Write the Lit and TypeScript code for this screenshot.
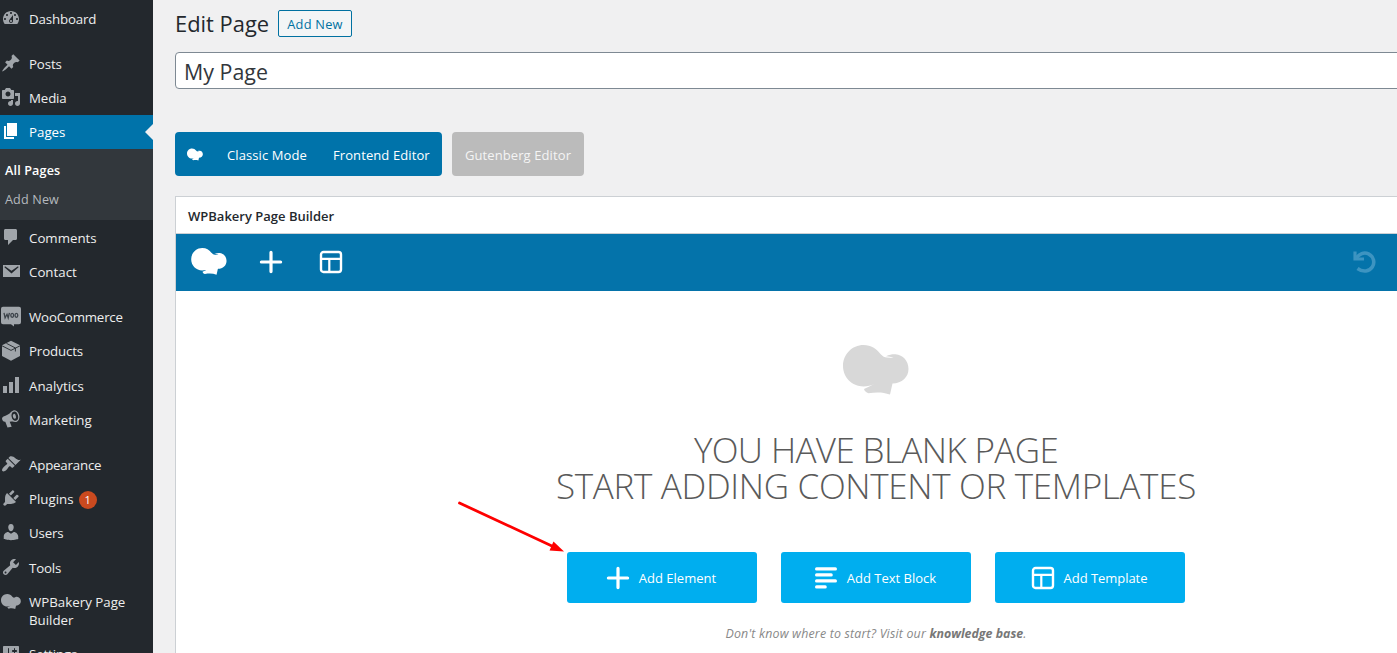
import { LitElement, html, css, svg } from "lit";
import { customElement, property } from "lit/decorators.js";

const hat = svg`<path d="M20.500 0C28.500 0 33 3.500 37.500 9C39.800 11.500 41.500 12.500 44 12.500L50.500 12.900C48.500 11.800 45.500 11.300 43 11.200C46.500 9.600 50 9 52.500 9.300C60 9.800 65.500 16 65.500 24C65.500 32 59 38.500 49.500 38.500L47 49.500C40 47 33 47 25.500 48.300C23 47.500 21.500 46 21 44L32 38.800C28 40.600 24.500 41.500 20.500 41.500C9 41.500 0 32.500 0 20.800C0 9.500 9 0 20.500 0Z"/>`;

const icons: Record<string, unknown> = {
  dashboard: svg`<path fill-rule="evenodd" d="M3.760 16h12.480c1.100-1.370 1.760-3.110 1.760-5 0-4.420-3.580-8-8-8s-8 3.580-8 8c0 1.890.66 3.630 1.760 5zM10 4c.55 0 1 .45 1 1s-.45 1-1 1-1-.45-1-1 .45-1 1-1zM6 6c.55 0 1 .45 1 1s-.45 1-1 1-1-.45-1-1 .45-1 1-1zm8 0c.55 0 1 .45 1 1s-.45 1-1 1-1-.45-1-1 .45-1 1-1zm-5.370 5.550L12 7v6c0 1.100-.9 2-2 2s-2-.9-2-2c0-.57.24-1.080.63-1.450zM4 10c.55 0 1 .45 1 1s-.45 1-1 1-1-.45-1-1 .45-1 1-1zm12 0c.55 0 1 .45 1 1s-.45 1-1 1-1-.45-1-1 .45-1 1-1zm-5 3c0-.55-.45-1-1-1s-1 .45-1 1 .45 1 1 1 1-.45 1-1z"/>`,
  post: svg`<path d="M10.440 3.020l1.820-1.820 6.360 6.350-1.830 1.820c-1.050-.68-2.480-.57-3.410.36l-.75.75c-.92.93-1.040 2.350-.35 3.410l-1.830 1.820-2.410-2.410-2.800 2.790c-.42.42-3.380 2.710-3.800 2.290s1.860-3.390 2.280-3.810l2.790-2.790L4.100 9.360l1.830-1.820c1.050.69 2.480.57 3.400-.36l.75-.75c.93-.92 1.050-2.350.36-3.410z"/>`,
  media: svg`<path fill-rule="evenodd" d="M13 11V4c0-.55-.45-1-1-1h-1.670L9 1H5L3.670 3H2c-.55 0-1 .45-1 1v7c0 .55.45 1 1 1h10c.55 0 1-.45 1-1zM7 4.500c1.380 0 2.500 1.120 2.500 2.500S8.380 9.500 7 9.500 4.500 8.380 4.500 7 5.620 4.500 7 4.500zM14 6h5v10.500c0 1.380-1.120 2.500-2.500 2.500S14 17.880 14 16.500s1.120-2.500 2.500-2.500c.17 0 .34.02.5.05V9h-3V6zm-4 8.050V13h2v3.500c0 1.380-1.120 2.500-2.500 2.500S7 17.880 7 16.500 8.120 14 9.500 14c.17 0 .34.02.5.05z"/>`,
  page: svg`<path d="M6 15V2h10v13H6zm-1 1h8v2H3V5h2v11z"/>`,
  comment: svg`<path d="M4.500 2h10c.9 0 1.500.6 1.500 1.500v8c0 .9-.6 1.500-1.500 1.500H12l-5 5v-5H4.500c-.9 0-1.500-.6-1.500-1.500v-8C3 2.600 3.600 2 4.500 2z"/>`,
  mail: svg`<path fill-rule="evenodd" d="M2 4h17v12H2zM4 5.200L3.400 6.300l7.100 6.300 7.100-6.300-.6-1.100-6.500 4.500z"/>`,
  woo: svg`<g transform="translate(0 .8)"><path d="M2 0h16a2 2 0 0 1 2 2v13.500a2 2 0 0 1-2 2h-5v2.300l-3-2.300H2a2 2 0 0 1-2-2V2a2 2 0 0 1 2-2z"/><g fill="none" stroke="#3c434a" stroke-width="1.300"><path d="M3 6l1.100 5L6 7.500 7.200 11 8.400 6"/><ellipse cx="11.200" cy="8.500" rx="1.400" ry="2"/><ellipse cx="15.400" cy="8.500" rx="1.400" ry="2"/></g></g>`,
  box: svg`<g transform="translate(0 .8)"><path d="M10 0l9 4.500v10.800L10 20l-9-4.700V4.500z"/><path d="M1 5l9 4.600L19 5M5.400 2.500l9 4.700v3.500" fill="none" stroke="#23282d" stroke-width=".9"/></g>`,
  chart: svg`<path d="M2 11h4v7H2zM8 7h4v11H8zM14 2h4v16h-4z"/>`,
  horn: svg`<path d="M10.500 2.500C8 5.500 5 6.600 2.500 7.500 1 8.200.8 9.500 1.300 10.800c.5 1.400 1.600 2.200 3 1.900l2.200 5.800 4.200-.8-2-4.900c2-.5 4.100-.6 6.300 0z"/><ellipse cx="13.800" cy="7.200" rx="3.900" ry="5.300" transform="rotate(-15 13.800 7.200)" fill="#23282d" stroke="#a0a5aa" stroke-width="1.300"/><ellipse cx="13.400" cy="7.300" rx="1.500" ry="2.500" transform="rotate(-15 13.400 7.300)"/>`,
  brush: svg`<path d="M14.480 11.060L7.410 3.990l1.500-1.500c.5-.56 2.300-.47 3.510.32 1.210.8 1.430 1.280 2.910 2.100 1.180.64 2.450 1.260 4.450.85zm-.71.71L6.700 4.700 4.930 6.470c-.39.39-.39 1.020 0 1.410l1.060 1.060c.39.39.39 1.030 0 1.420-.6.6-1.430 1.110-2.210 1.690-.35.26-.7.53-1.010.84C1.430 14.230.4 16.080 1.400 17.070c.99 1 2.840-.03 4.180-1.360.31-.31.58-.66.85-1.020.57-.78 1.080-1.610 1.690-2.210.39-.39 1.020-.39 1.410 0l1.060 1.060c.39.39 1.020.39 1.410 0z"/>`,
  plug: svg`<path d="M13.110 4.360L9.870 7.600 8 5.730l3.240-3.240c.35-.34 1.050-.2 1.560.32.52.51.66 1.210.31 1.550zm-8 1.770l.91-1.120 9.010 9.010-1.190.84c-.71.71-2.630 1.160-3.820 1.160H6.140L4.900 17.260c-.59.59-1.540.59-2.120 0-.59-.58-.59-1.530 0-2.120l1.240-1.240v-3.880c0-1.130.4-3.190 1.090-3.890zm7.260 3.970l3.240-3.240c.34-.35 1.040-.21 1.550.31.52.51.66 1.210.31 1.550l-3.240 3.250z"/>`,
  user: svg`<path d="M10 9.250c-2.270 0-2.730-3.440-2.730-3.440C7 4.020 7.820 2 9.970 2c2.160 0 2.980 2.020 2.710 3.810 0 0-.41 3.440-2.680 3.440zm0 2.570L12.720 10c2.390 0 4.520 2.330 4.520 4.530v2.490s-3.650 1.130-7.240 1.130c-3.650 0-7.240-1.130-7.240-1.130v-2.490c0-2.250 1.940-4.480 4.470-4.480z"/>`,
  wrench: svg`<path fill-rule="evenodd" d="M16.680 9.770c-1.340 1.340-3.300 1.670-4.950.99l-5.410 6.520c-.99.99-2.590.99-3.580 0s-.99-2.590 0-3.570l6.520-5.420c-.68-1.650-.35-3.610.99-4.950 1.280-1.280 3.120-1.620 4.720-1.060l-2.890 2.890 2.820 2.820 2.860-2.870c.53 1.580.18 3.390-1.080 4.650zM3.810 16.210c.4.39 1.040.39 1.430 0 .4-.4.4-1.040 0-1.430-.39-.4-1.030-.4-1.430 0-.39.39-.39 1.030 0 1.430z"/>`,
  bakery: svg`<g transform="translate(0 3) scale(.303)">${hat}</g>`,
  sliders: svg`<path fill-rule="evenodd" d="M18 16V4c0-.55-.45-1-1-1H3c-.55 0-1 .45-1 1v12c0 .55.45 1 1 1h14c.55 0 1-.45 1-1zM8 11h1c.55 0 1 .45 1 1s-.45 1-1 1H8v1.500c0 .28-.22.5-.5.5s-.5-.22-.5-.5V13H6c-.55 0-1-.45-1-1s.45-1 1-1h1V5.500c0-.28.22-.5.5-.5s.5.22.5.5zM13 9h-1c-.55 0-1-.45-1-1s.45-1 1-1h1V5.500c0-.28.22-.5.5-.5s.5.22.5.5V7h1c.55 0 1 .45 1 1s-.45 1-1 1h-1v5.500c0 .28-.22.5-.5.5s-.5-.22-.5-.5z"/>`,
};

const plusIcon = html`<svg class="glyph" viewBox="0 0 24 24"><path d="M12 2.400v19.200M2.400 12h19.200" stroke="#fff" stroke-width="3.200" stroke-linecap="round" /></svg>`;
const layoutIcon = html`<svg class="glyph" viewBox="0 0 24 24"><g fill="none" stroke="#fff"><rect x="2" y="2" width="20" height="20" rx="2.500" stroke-width="2.400" /><path d="M2 8.800h20M10.300 8.800V22" stroke-width="2.200" /></g></svg>`;
const textIcon = html`<svg class="glyph" viewBox="0 0 24 24"><path d="M2.600 2.900h18.800M2.600 8.900h14.600M2.600 14.900h18.800M2.600 20.900h8.600" stroke="#fff" stroke-width="3.200" stroke-linecap="round" /></svg>`;

interface Item {
  icon: string;
  label: string;
  cls: string;
  gap?: boolean;
  current?: boolean;
  count?: number;
  sub?: string[];
}

const menu: Item[] = [
  { icon: "dashboard", label: "Dashboard", cls: "dashboard" },
  { icon: "post", label: "Posts", cls: "posts", gap: true },
  { icon: "media", label: "Media", cls: "media" },
  { icon: "page", label: "Pages", cls: "pages", current: true, sub: ["All Pages", "Add New"] },
  { icon: "comment", label: "Comments", cls: "comments" },
  { icon: "mail", label: "Contact", cls: "contact" },
  { icon: "woo", label: "WooCommerce", cls: "woo", gap: true },
  { icon: "box", label: "Products", cls: "products" },
  { icon: "chart", label: "Analytics", cls: "analytics" },
  { icon: "horn", label: "Marketing", cls: "marketing" },
  { icon: "brush", label: "Appearance", cls: "appearance", gap: true },
  { icon: "plug", label: "Plugins", cls: "plugins", count: 1 },
  { icon: "user", label: "Users", cls: "users" },
  { icon: "wrench", label: "Tools", cls: "tools" },
  { icon: "bakery", label: "WPBakery Page Builder", cls: "bakery" },
  { icon: "sliders", label: "Settings", cls: "settings" },
];

@customElement("admin-menu")
export class AdminMenu extends LitElement {
  @property({ attribute: false }) items: Item[] = [];

  static styles = css`
    :host { display: block; box-sizing: border-box; width: 153px; flex: none; background: #23282d; padding-top: 2px; overflow: hidden; }
    .item { display: flex; height: 34px; box-sizing: border-box; padding: 8px 0 8px 1px; color: #eee; font-size: 13.300px; line-height: 18px; position: relative; }
    .gap { margin-top: 11px; }
    .analytics, .tools { margin-top: 1px; }
    .item.bakery { height: 52px; }
    .dashboard, .posts, .media, .products, .users, .tools, .settings { letter-spacing: -0.150px; }
    .woo, .appearance { letter-spacing: -0.200px; }
    .current { background: #0073aa; color: #fff; }
    .current::after { content: ""; position: absolute; right: 0; top: 9px; border: solid transparent; border-width: 8px 8px 8px 0; border-right-color: #f0f0f1; }
    .icon { width: 20px; height: 20px; flex: none; margin: -2px 8px -2px 0; fill: #a0a5aa; overflow: visible; }
    .current .icon { fill: #fff; }
    .count { display: inline-block; background: #ca4a1f; color: #fff; border-radius: 9px; width: 18px; height: 18px; font-size: 11px; line-height: 18px; text-align: center; margin-left: 5px; vertical-align: top; margin-top: 1px; }
    .sub { background: #32373c; padding: 7px 0 6px 5px; margin-bottom: 1px; height: 71px; box-sizing: border-box; }
    .link { height: 29px; line-height: 29px; font-size: 12.600px; color: #b4b9be; letter-spacing: 0.150px; }
    .link.on { color: #fff; font-weight: 600; }
  `;

  render() {
    return this.items.map(
      (i) => html`<div class="item ${i.cls} ${i.gap ? "gap" : ""} ${i.current ? "current" : ""}">
          <svg class="icon" viewBox="0 0 20 20">${icons[i.icon]}</svg>
          <div class="label">${i.label}${i.count ? html`<span class="count">${i.count}</span>` : ""}</div>
        </div>
        ${i.sub ? html`<div class="sub">${i.sub.map((s, n) => html`<div class="link ${n === 0 ? "on" : ""}">${s}</div>`)}</div>` : ""}`,
    );
  }
}

@customElement("app-root")
export class AppRoot extends LitElement {
  static styles = css`
    :host { display: flex; position: relative; width: 1397px; height: 653px; overflow: hidden; background: #f0f0f1; font-family: "Open Sans", "Noto Sans", sans-serif; color: #23282d; }
    .main { flex: 1; min-width: 0; padding: 10px 0 0 22px; overflow: hidden; }
    .head { display: flex; align-items: center; gap: 9px; height: 27px; }
    .title { width: 94px; white-space: nowrap; font-size: 21.900px; line-height: 27px; }
    .add { box-sizing: border-box; height: 27px; width: 74px; border: 1px solid #0071a1; border-radius: 2px; background: #f3f5f6; color: #0071a1; font-size: 12.800px; font-weight: 500; letter-spacing: 0.250px; line-height: 26px; text-align: center; }
    .name { box-sizing: border-box; width: 1402px; height: 37px; margin-top: 15px; border: 1px solid #7e8993; border-radius: 4px; background: #fff; padding-left: 8px; font-size: 21.400px; line-height: 38px; color: #32373c; }
    .modes { display: flex; gap: 10px; margin-top: 43px; height: 44px; font-size: 13px; line-height: 46px; letter-spacing: 0.100px; color: #fff; }
    .group { display: flex; width: 267px; background: #0073aa; border-radius: 4px; }
    .small { width: 16px; height: 13px; fill: #fff; margin: 16px 24px 0 12px; }
    .frontend { margin-left: 26px; }
    .disabled { width: 132px; background: #bbb; border-radius: 4px; text-align: center; color: #f4f4f4; }
    .panel { box-sizing: border-box; width: 1402px; height: 480px; margin-top: 20px; border: 1px solid #ccd0d4; background: #fff; }
    .caption { height: 36px; padding-left: 12px; border-bottom: 1px solid #ccd0d4; font-size: 13px; font-weight: 600; line-height: 38px; }
    .bar { display: flex; align-items: flex-start; height: 57px; background: #0473aa; }
    .logo { width: 36px; height: 27px; fill: #fff; margin: 14px 0 0 15px; }
    .glyph { width: 24px; height: 24px; flex: none; display: block; }
    .tool { margin: 16px 0 0 32px; }
    .tool + .tool { margin-left: 36px; }
    .undo { width: 24px; height: 24px; margin: 16px 0 0 1009px; }
    .blank { display: flex; flex-direction: column; align-items: center; }
    .hat { width: 66px; height: 50px; margin-top: 54px; fill: #d8d8d8; }
    .big { margin-top: 37px; font-size: 35px; line-height: 36px; font-weight: 300; color: #5a5a5a; text-align: center; }
    .l1 { letter-spacing: -0.620px; }
    .l2 { letter-spacing: -0.320px; }
    .actions { display: flex; gap: 24px; margin-top: 48px; }
    .action { display: flex; align-items: center; justify-content: center; gap: 9px; width: 190px; height: 51px; box-sizing: border-box; padding-right: 2px; border-radius: 3px; background: #00aeef; color: #fff; font-size: 13px; }
    .a3 { letter-spacing: -0.050px; }
    .hint { margin-top: 21px; font-size: 12.400px; line-height: 20px; font-style: italic; letter-spacing: 0.180px; color: #888; }
    .kb { font-weight: 700; letter-spacing: 0; color: #777; }
    .arrow { position: absolute; left: 455px; top: 498px; width: 112px; height: 56px; }
  `;

  render() {
    return html`
      <admin-menu .items=${menu}></admin-menu>
      <div class="main">
        <div class="head"><div class="title">Edit Page</div><div class="add">Add New</div></div>
        <div class="name">My Page</div>
        <div class="modes">
          <div class="group">
            <svg class="small" viewBox="0 0 66 50">${hat}</svg>
            <span class="classic">Classic Mode</span><span class="frontend">Frontend Editor</span>
          </div>
          <div class="disabled"><span class="gut">Gutenberg Editor</span></div>
        </div>
        <div class="panel">
          <div class="caption">WPBakery Page Builder</div>
          <div class="bar">
            <svg class="logo" viewBox="0 0 66 50">${hat}</svg>
            <div class="tool">${plusIcon}</div>
            <div class="tool">${layoutIcon}</div>
            <svg class="undo" viewBox="0 0 24 24"><path d="M3.500 9H12M3 1.500v9" fill="none" stroke="#3d94c1" stroke-width="3.200" /><path d="M4.500 8C7 3.800 12 1.800 16.500 3.800C22 6.500 23 13 20.300 17C17.300 21.500 11 22.500 5.500 18.500" fill="none" stroke="#3d94c1" stroke-width="3.600" /></svg>
          </div>
          <div class="blank">
            <svg class="hat" viewBox="0 0 66 50">${hat}</svg>
            <div class="big"><div class="l1">YOU HAVE BLANK PAGE</div><div class="l2">START ADDING CONTENT OR TEMPLATES</div></div>
            <div class="actions">
              <div class="action">${plusIcon}<span class="a1">Add Element</span></div>
              <div class="action">${textIcon}<span class="a2">Add Text Block</span></div>
              <div class="action">${layoutIcon}<span class="a3">Add Template</span></div>
            </div>
            <div class="hint">Don't know where to start? Visit our <span class="kb">knowledge base</span>.</div>
          </div>
        </div>
      </div>
      <svg class="arrow" viewBox="455 498 112 56"><path d="M459.500 503L553 546.500" stroke="#fe0000" stroke-width="2.800" stroke-linecap="round" /><path d="M564 551.500L549.500 550.500L553.500 541.500Z" fill="#fe0000" /></svg>
    `;
  }
}
